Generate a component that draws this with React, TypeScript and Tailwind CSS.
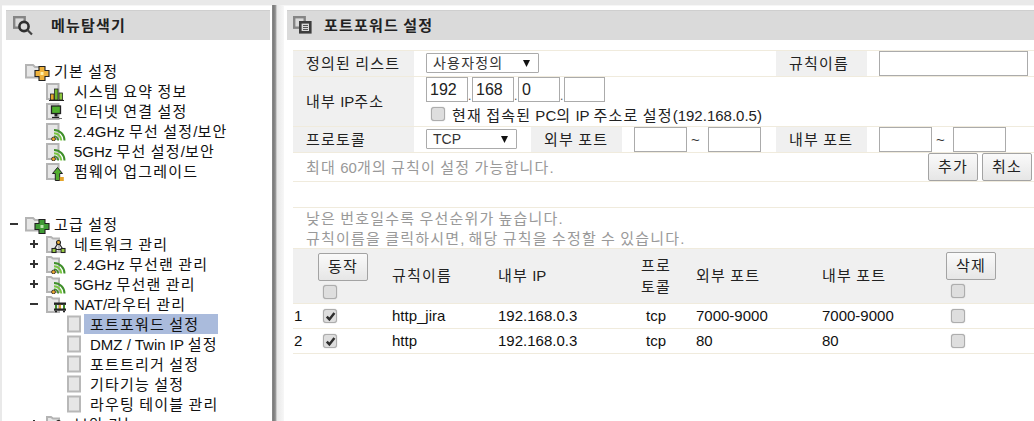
import React from "react";

const FONT = "[font-family:'Liberation_Sans','Noto_Sans_CJK_KR',sans-serif]";

function T({ s }: { s: string }) {
  const parts = s.split(/([\uac00-\ud7a3]+)/).filter(Boolean);
  return (
    <>
      {parts.map((p, i) =>
        /[\uac00-\ud7a3]/.test(p) ? (
          <span key={i} className="tracking-[1.2px]">{p}</span>
        ) : (
          <span key={i}>{p}</span>
        )
      )}
    </>
  );
}

const Ol = "#222";

function Doc({ x = 1 }: { x?: number }) {
  return <rect x={x} y={3} width={11.5} height={15} fill="#e6e6e6" stroke="#b4b4b4" strokeWidth={2} />;
}

function Overlay({ kind }: { kind: string }) {
  switch (kind) {
    case "bars":
      return (
        <g stroke={Ol} strokeWidth={0.8}>
          <rect x={4.5} y={13} width={3.5} height={6} fill="#e5a52a" />
          <rect x={8.5} y={8} width={3.5} height={11} fill="#6fb52c" />
          <rect x={13} y={12} width={3.5} height={7} fill="#8cc63f" />
          <line x1={3} y1={19.6} x2={18} y2={19.6} strokeWidth={1.3} />
        </g>
      );
    case "monitor":
      return (
        <g>
          <rect x={5.5} y={5} width={9} height={7.5} fill="#4faf2e" stroke={Ol} strokeWidth={1.3} />
          <rect x={8.5} y={12.5} width={3} height={3} fill={Ol} />
          <path d="M6 16.5h7" stroke={Ol} strokeWidth={1.3} />
          <path d="M13 17.5h3" stroke="#777" strokeWidth={1} />
        </g>
      );
    case "wifi":
      return (
        <g fill="none">
          <path d="M8 9a10.5 10.5 0 0 1 10.5 10.5" stroke="#3f8f2a" strokeWidth={2} />
          <path d="M8 12.2a7.3 7.3 0 0 1 7.3 7.3" stroke="#78c640" strokeWidth={2} />
          <path d="M8 15.3a4.2 4.2 0 0 1 4.2 4.2" stroke="#3f8f2a" strokeWidth={1.8} />
          <circle cx={7.5} cy={18} r={1.9} fill="#eda82c" stroke={Ol} strokeWidth={0.8} />
        </g>
      );
    case "up":
      return (
        <g>
          <path d="M11.5 6.5l5 6h-2.8v7h-4.4v-7h-2.8z" fill="#52ad2e" stroke={Ol} strokeWidth={1} />
          <rect x={13.8} y={16} width={4} height={4} fill="#e5a52a" />
        </g>
      );
    case "net":
      return (
        <g stroke={Ol} strokeWidth={1.1} fill="none">
          <path d="M12.5 8.5L8 15.5h9z" />
          <circle cx={12.5} cy={8.5} r={2} fill="#edb23a" />
          <rect x={6} y={14.5} width={4} height={4} fill="#9ccf45" />
          <rect x={15} y={14.5} width={4} height={4} fill="#9ccf45" />
        </g>
      );
    case "nat":
      return (
        <g>
          <rect x={8} y={8.5} width={12} height={2.4} fill={Ol} />
          <rect x={9} y={10.9} width={2} height={5} fill="#3d8a27" />
          <rect x={13} y={10.9} width={2} height={5} fill="#e0a12a" />
          <rect x={17} y={10.9} width={2} height={5} fill="#3d8a27" />
          <rect x={8} y={14.5} width={12} height={2.2} fill={Ol} />
          <rect x={9} y={16.7} width={2} height={1.6} fill={Ol} />
          <rect x={17} y={16.7} width={2} height={1.6} fill={Ol} />
        </g>
      );
  }
  return null;
}

function Toggle({ t }: { t?: "+" | "-" }) {
  if (!t) return null;
  return (
    <svg width={8} height={8} viewBox="0 0 8 8" className="block">
      <rect x={0} y={3} width={8} height={2} fill="#333" />
      {t === "+" && <rect x={3} y={0} width={2} height={8} fill="#333" />}
    </svg>
  );
}

function Folder({ color, hi }: { color: string; hi: string }) {
  return (
    <svg width={25} height={20} viewBox="0 0 25 20" className="block shrink-0">
      <path d="M1 4h7l2 2h5v10.5H1z" fill="#e6e6e6" stroke="#b4b4b4" strokeWidth={2} />
      <path d="M14 5.5h6v4h4v6h-4v4h-6v-4h-4v-6h4z" fill={color} stroke="#222" strokeWidth={1.1} />
      <rect x={15.5} y={11} width={3} height={3} fill={hi} />
    </svg>
  );
}

function L0({ text, toggle, color, hi }: { text: string; toggle?: "-"; color: string; hi: string }) {
  return (
    <div className="flex h-5 items-center pl-[10px]">
      <div className="w-[15px]"><Toggle t={toggle} /></div>
      <Folder color={color} hi={hi} />
      <span className="ml-[4px] pt-[2px]"><T s={text} /></span>
    </div>
  );
}

function L1({ text, toggle, icon, folder }: { text: string; toggle?: "+" | "-"; icon: string; folder?: boolean }) {
  return (
    <div className="flex h-5 items-center pl-[30px]">
      <div className="w-4"><Toggle t={toggle} /></div>
      <svg width={20} height={20} viewBox="0 0 20 20" className="block shrink-0">
        {folder ? <path d="M1 3h4l2 1.5h6V18H1z" fill="#e6e6e6" stroke="#b4b4b4" strokeWidth={2} /> : <Doc />}
        <Overlay kind={icon} />
      </svg>
      <span className="ml-[8px] whitespace-nowrap pt-[2px]"><T s={text} /></span>
    </div>
  );
}

function L2({ text, on }: { text: string; on?: boolean }) {
  return (
    <div className="flex h-5 items-center pl-[67px]">
      <svg width={14} height={20} viewBox="0 0 14 20" className="block shrink-0">
        <rect x={1} y={2.5} width={12} height={15} fill="#e6e6e6" stroke="#b8b8b8" strokeWidth={2} />
      </svg>
      <span className={"ml-[3px] h-5 w-[134px] whitespace-nowrap pl-[6px] leading-[22px] " + (on ? "bg-[#aabbdc]" : "")}>
        <T s={text} />
      </span>
    </div>
  );
}

function Cb({ on }: { on?: boolean }) {
  return (
    <div className="flex h-[14px] w-[14px] items-center justify-center rounded-[3px] border border-[#adadad] bg-[#dedede] shadow-[0_0_1px_#999]">
      {on && (
        <svg width={11} height={11} viewBox="0 0 11 11">
          <path d="M1.8 5.6L4.4 8.4 9.4 2" fill="none" stroke="#2f2f2f" strokeWidth={2.5} />
        </svg>
      )}
    </div>
  );
}

function Btn({ text }: { text: string }) {
  return (
    <div className="flex h-[28px] w-[50px] items-center justify-center rounded-[2px] border border-[#a3a3a3] bg-gradient-to-b from-[#fafafa] to-[#e6e6e6] text-[#222]">
      <span><T s={text} /></span>
    </div>
  );
}

function Inp({ w, v, h = "h-[25px]" }: { w: string; v?: string; h?: string }) {
  return (
    <div className={`${w} ${h} flex items-center border border-[#ababab] bg-white pl-[3px] text-[#222]`}>{v}</div>
  );
}

function Sel({ w, v }: { w: string; v: string }) {
  return (
    <div className={`${w} flex h-5 items-center justify-between rounded-[1px] border border-[#ababab] bg-white pl-[6px] pr-[8px] text-[14px] text-[#333]`}>
      <span><T s={v} /></span>
      <svg width={7} height={7} viewBox="0 0 7 7"><path d="M0 0h7L3.5 7z" fill="#111" /></svg>
    </div>
  );
}

function Lbl({ s, w = "" }: { s: string; w?: string }) {
  return (
    <div className={`${w} flex items-center bg-[#f0f0f0] text-[#222]`}>
      <span className="whitespace-nowrap"><T s={s} /></span>
    </div>
  );
}

const rowLine = "border-b border-[#f0ebdd]";

export default function App() {
  return (
    <div className={`flex h-screen overflow-hidden bg-[#e9e9e9] pt-[5px] text-[15px] leading-5 text-[#111] ${FONT}`}>
      <aside className="ml-[2px] w-[270px] shrink-0 border-t border-[#f6f6f6] bg-white pl-[4px] pr-[2px] pt-[4px]">
        <div className="flex h-[30px] items-center border-t border-[#cfcfcf] bg-[#dadada] pl-[7px]">
          <svg width={20} height={20} viewBox="0 0 20 20" className="block shrink-0">
            <rect x={1.2} y={1.2} width={10.5} height={10.5} fill="none" stroke="#858585" strokeWidth={2.4} />
            <circle cx={11} cy={10.5} r={4.6} fill="#dadada" stroke="#2e2e2e" strokeWidth={2.6} />
            <path d="M14.5 14L19 18.5" stroke="#444" strokeWidth={2.2} />
          </svg>
          <span className="ml-[18px] font-bold text-[#222]"><T s="메뉴탐색기" /></span>
        </div>
        <div className="-ml-[6px] mt-[21px]">
          <L0 text="기본 설정" color="#eeb23c" hi="#fff0a8" />
          <L1 text="시스템 요약 정보" icon="bars" />
          <L1 text="인터넷 연결 설정" icon="monitor" />
          <L1 text="2.4GHz 무선 설정/보안" icon="wifi" />
          <L1 text="5GHz 무선 설정/보안" icon="wifi" />
          <L1 text="펌웨어 업그레이드" icon="up" />
          <div className="h-[33px]" />
          <L0 text="고급 설정" toggle="-" color="#3f9b35" hi="#bfe8b0" />
          <L1 text="네트워크 관리" toggle="+" icon="net" folder />
          <L1 text="2.4GHz 무선랜 관리" toggle="+" icon="wifi" folder />
          <L1 text="5GHz 무선랜 관리" toggle="+" icon="wifi" folder />
          <L1 text="NAT/라우터 관리" toggle="-" icon="nat" folder />
          <L2 text="포트포워드 설정" on />
          <L2 text="DMZ / Twin IP 설정" />
          <L2 text="포트트리거 설정" />
          <L2 text="기타기능 설정" />
          <L2 text="라우팅 테이블 관리" />
          <L1 text="보안 기능" toggle="+" icon="net" folder />
        </div>
      </aside>

      <div className="w-[12px] shrink-0 bg-[linear-gradient(to_right,#8a8a8a,#7a7a7a_15%,#9a9a9a_30%,#e8e8e8_42%,#f7f7f7)]" />

      <main className="min-w-0 flex-1 border-t border-[#f6f6f6] bg-white pl-[3px] pt-[4px]">
        <div className="flex h-[30px] items-center border-t border-[#cfcfcf] bg-[#dadada] pl-[6px]">
          <svg width={20} height={20} viewBox="0 0 20 20" className="block shrink-0">
            <rect x={1.2} y={1.2} width={10.5} height={10.5} fill="none" stroke="#858585" strokeWidth={2.4} />
            <rect x={7.3} y={6.3} width={10} height={10} fill="#dadada" stroke="#3d3d3d" strokeWidth={2.6} />
            <path d="M10 9.5h5M10 11.5h5M10 13.5h5" stroke="#555" strokeWidth={1} />
          </svg>
          <span className="ml-[11px] font-bold text-[#222]"><T s="포트포워드 설정" /></span>
        </div>

        <div className="ml-[6px] mt-[10px] border-t border-[#f0ebdd]">
          <div className={`grid h-[26px] grid-cols-[121px_362px_91px_1fr] ${rowLine}`}>
            <Lbl s="정의된 리스트" w="pl-[13px]" />
            <div className="flex items-start pl-[12px] pt-[2px]"><Sel w="w-[113px]" v="사용자정의" /></div>
            <Lbl s="규칙이름" w="pl-[13px]" />
            <div className="pl-[12px]"><Inp w="w-[149px]" /></div>
          </div>

          <div className={`grid h-[50px] grid-cols-[121px_1fr] ${rowLine}`}>
            <Lbl s="내부 IP주소" w="pl-[13px]" />
            <div className="pl-[12px]">
              <div className="flex items-end text-[16px]">
                <Inp w="w-[42px]" v="192" />
                <span className="w-[4px] text-[12px] leading-3 text-[#555]">.</span>
                <Inp w="w-[42px]" v="168" />
                <span className="w-[4px] text-[12px] leading-3 text-[#555]">.</span>
                <Inp w="w-[42px]" v="0" />
                <span className="w-[4px] text-[12px] leading-3 text-[#555]">.</span>
                <Inp w="w-[41px]" />
              </div>
              <div className="mt-[2px] flex h-5 items-center pl-[5px]">
                <Cb />
                <span className="ml-[7px] whitespace-nowrap pt-[3px] text-[#222]"><T s="현재 접속된 PC의 IP 주소로 설정(192.168.0.5)" /></span>
              </div>
            </div>
          </div>

          <div className={`grid h-[26px] grid-cols-[121px_117px_91px_154px_91px_1fr] ${rowLine}`}>
            <Lbl s="프로토콜" w="pl-[13px]" />
            <div className="pl-[12px] pt-[2px]"><Sel w="w-[91px]" v="TCP" /></div>
            <Lbl s="외부 포트" w="pl-[13px]" />
            <div className="flex items-center pl-[12px]">
              <Inp w="w-[53px]" />
              <span className="w-[21px] pl-[4px] text-[#333]">~</span>
              <Inp w="w-[53px]" />
            </div>
            <Lbl s="내부 포트" w="pl-[13px]" />
            <div className="flex items-center pl-[12px]">
              <Inp w="w-[53px]" />
              <span className="w-[21px] pl-[4px] text-[#333]">~</span>
              <Inp w="w-[53px]" />
            </div>
          </div>

          <div className={`flex h-[29px] items-center justify-between pl-[13px] pr-[2px] ${rowLine}`}>
            <span className="pt-[2px] text-[#999]"><T s="최대 60개의 규칙이 설정 가능합니다." /></span>
            <div className="flex gap-[4px]">
              <Btn text="추가" />
              <Btn text="취소" />
            </div>
          </div>

          <div className={`h-[26px] ${rowLine}`} />

          <div className="h-[40px] pl-[13px] pt-[1px] text-[#999]">
            <div><T s="낮은 번호일수록 우선순위가 높습니다." /></div>
            <div><T s="규칙이름을 클릭하시면, 해당 규칙을 수정할 수 있습니다." /></div>
          </div>

          <table className="w-full table-fixed border-collapse">
            <colgroup>
              <col className="w-[25px]" />
              <col className="w-[74px]" />
              <col className="w-[106px]" />
              <col className="w-[143px]" />
              <col className="w-[55px]" />
              <col className="w-[126px]" />
              <col className="w-[124px]" />
              <col />
            </colgroup>
            <thead>
              <tr className="h-[55px] border-y border-[#f0ebdd] bg-[#f0f0f0] text-left font-normal text-[#222]">
                <th />
                <th className="pb-[1px] align-middle font-normal">
                  <Btn text="동작" />
                  <div className="ml-[5px] mt-[4px]"><Cb /></div>
                </th>
                <th className="font-normal"><T s="규칙이름" /></th>
                <th className="font-normal"><T s="내부 IP" /></th>
                <th className="font-normal leading-[21px]">
                  <T s="프로" /><br /><T s="토콜" />
                </th>
                <th className="font-normal"><T s="외부 포트" /></th>
                <th className="font-normal"><T s="내부 포트" /></th>
                <th className="pb-[3px] font-normal">
                  <Btn text="삭제" />
                  <div className="ml-[5px] mt-[4px]"><Cb /></div>
                </th>
              </tr>
            </thead>
            <tbody className="text-[#111]">
              {[
                ["1", true, "http_jira", "192.168.0.3", "tcp", "7000-9000", "7000-9000"],
                ["2", true, "http", "192.168.0.3", "tcp", "80", "80"],
              ].map((r) => (
                <tr key={r[0] as string} className="h-[25px] border-b border-[#f0ebdd]">
                  <td className="pl-[1px]">{r[0]}</td>
                  <td><div className="ml-[5px]"><Cb on={r[1] as boolean} /></div></td>
                  <td>{r[2]}</td>
                  <td>{r[3]}</td>
                  <td><div className="w-[30px] text-center">{r[4]}</div></td>
                  <td>{r[5]}</td>
                  <td>{r[6]}</td>
                  <td><div className="ml-[5px]"><Cb /></div></td>
                </tr>
              ))}
            </tbody>
          </table>
        </div>
      </main>
    </div>
  );
}
